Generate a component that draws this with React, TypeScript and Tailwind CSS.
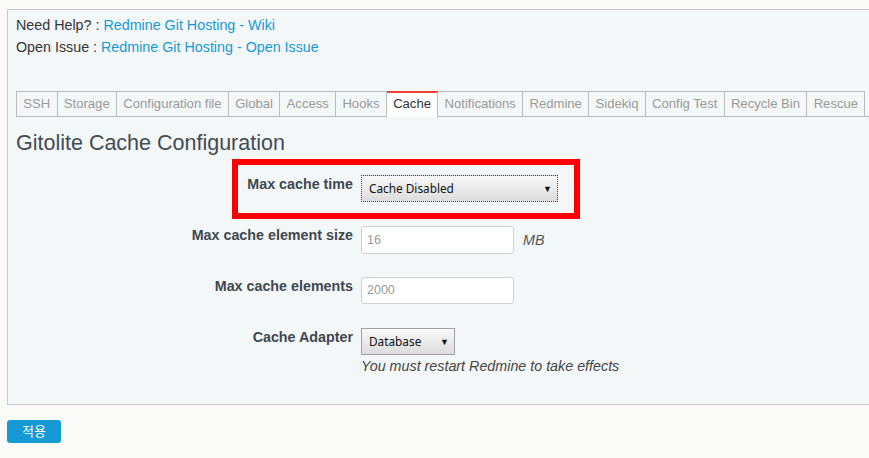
export default function App() {
  const tabs = [
    "SSH",
    "Storage",
    "Configuration file",
    "Global",
    "Access",
    "Hooks",
    "Cache",
    "Notifications",
    "Redmine",
    "Sidekiq",
    "Config Test",
    "Recycle Bin",
    "Rescue",
  ];
  return (
    <div className="w-[869px] h-[458px] overflow-hidden bg-[#fafaf9] pt-[9px] pl-[7px] font-['Liberation_Sans',Arial,'Noto_Sans_CJK_KR',sans-serif] text-[#333]">
      <div className="w-[900px] h-[396px] border border-[#c8c8c8] bg-[#f4f7f8] pl-2 pt-1">
        <div className="text-[14.3px] leading-[22px]">
          <div>
            Need Help? : <span className="text-[#169ad6]">Redmine Git Hosting - Wiki</span>
          </div>
          <div>
            Open Issue : <span className="text-[#169ad6]">Redmine Git Hosting - Open Issue</span>
          </div>
        </div>

        <div className="mt-[33px] flex h-[26px] border-b border-[#bcbcbc]">
          {tabs.map((t, i) => {
            const active = t === "Cache";
            return (
              <div
                key={t}
                className={
                  active
                    ? "h-[26px] border-t-2 border-r border-t-[#ee4035] border-r-[#bcbcbc] bg-white px-[6.3px] text-[13.1px] leading-[22px] text-[#333]"
                    : i === 0
                    ? "h-[25px] border-t border-r border-l border-[#bcbcbc] px-[6.3px] text-[13.1px] leading-[23px] text-[#999]"
                    : "h-[25px] border-t border-r border-[#bcbcbc] px-[6.3px] text-[13.1px] leading-[23px] text-[#999]"
                }
              >
                {t}
              </div>
            );
          })}
        </div>

        <h2 className="mt-[13px] text-[21.5px] leading-[26px] text-[#434b52]">Gitolite Cache Configuration</h2>

        <div className="mt-[19px] flex flex-col">
          <div className="relative flex items-start">
            <div className="pointer-events-none absolute left-[216px] top-[-16px] h-[60px] w-[348px] border-[6px] border-[#ff0000]" />
            <div className="w-[337px] text-right text-[14.3px] font-bold leading-[18px] text-[#3f474e]">Max cache time</div>
            <div className="ml-[8px] flex h-[27px] w-[197px] items-center justify-between border border-dotted border-[#444] bg-gradient-to-b from-[#f8f8f8] to-[#dcdcdc] pl-[7px] pr-[5px] font-['Noto_Sans',sans-serif] text-[11.8px] text-[#111]">
              <span>Cache Disabled</span>
              <span className="text-[9px]">▼</span>
            </div>
          </div>

          <div className="mt-[24px] flex items-start">
            <div className="w-[337px] text-right text-[14.3px] font-bold leading-[18px] text-[#3f474e]">Max cache element size</div>
            <div className="ml-[8px] flex h-[28px] w-[153px] items-center rounded-[3px] border border-[#d0d0d0] bg-white pl-[5px] text-[12.5px] text-[#999]">
              16
            </div>
            <div className="ml-[9px] mt-[5px] text-[14.3px] italic leading-[18px] text-[#555]">MB</div>
          </div>

          <div className="mt-[23px] flex items-start">
            <div className="w-[337px] text-right text-[14.3px] font-bold leading-[18px] text-[#3f474e]">Max cache elements</div>
            <div className="ml-[8px] flex h-[27px] w-[153px] items-center rounded-[3px] border border-[#d0d0d0] bg-white pl-[5px] text-[12.5px] text-[#999]">
              2000
            </div>
          </div>

          <div className="mt-[24px] flex items-start">
            <div className="w-[337px] text-right text-[14.3px] font-bold leading-[18px] text-[#3f474e]">Cache Adapter</div>
            <div className="ml-[8px] flex flex-col">
              <div className="flex h-[27px] w-[94px] items-center justify-between border border-[#a0a0a0] bg-gradient-to-b from-[#f8f8f8] to-[#dcdcdc] pl-[7px] pr-[5px] font-['Noto_Sans',sans-serif] text-[11.8px] text-[#111]">
                <span>Database</span>
                <span className="text-[9px]">▼</span>
              </div>
              <div className="mt-[2px] whitespace-nowrap text-[14.3px] italic leading-[18px] text-[#444]">
                You must restart Redmine to take effects
              </div>
            </div>
          </div>
        </div>
      </div>

      <div className="mt-[15px] flex h-[23px] w-[54px] items-center justify-center rounded-[3px] bg-[#169ad6] text-[13px] text-white">
        적용
      </div>
    </div>
  );
}
